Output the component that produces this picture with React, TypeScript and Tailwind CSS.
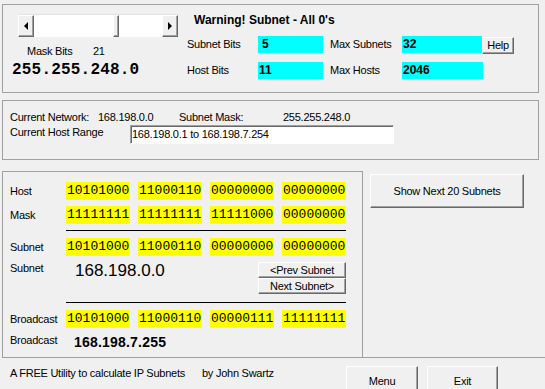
import React from "react";

const raised =
  "border border-t-white border-l-white border-r-[#696969] border-b-[#696969] bg-[#f0f0f0] shadow-[inset_-1px_-1px_0_#a0a0a0]";

function Octets({ values }: { values: string[] }) {
  return (
    <div className="flex gap-[8px]">
      {values.map((v, i) => (
        <div
          key={i}
          className="h-[18px] w-[64px] bg-[#ffff00] pl-[1px] font-['Liberation_Mono',monospace] text-[13px] leading-[18px] tracking-normal text-black"
        >
          {v}
        </div>
      ))}
    </div>
  );
}

function BitRow({ label, values, className = "" }: { label: string; values: string[]; className?: string }) {
  return (
    <div className={`flex items-center ${className}`}>
      <span className="w-[56px]">{label}</span>
      <Octets values={values} />
    </div>
  );
}

function ScrollBar() {
  return (
    <div className="flex h-[23px] w-[160px] border-t border-[#e3e3e3]">
      <div className={`flex w-[16px] items-center justify-center ${raised}`}>
        <div className="h-0 w-0 border-y-[4px] border-r-[4px] border-y-transparent border-r-black" />
      </div>
      <div className="w-[79px] bg-white" />
      <div className={`w-[6px] ${raised}`} />
      <div className="flex-1 bg-white" />
      <div className={`flex w-[16px] items-center justify-center ${raised}`}>
        <div className="h-0 w-0 border-y-[4px] border-l-[4px] border-y-transparent border-l-black" />
      </div>
    </div>
  );
}

function StatBox({ value, pad, width }: { value: string; pad: string; width: string }) {
  return (
    <div className={`h-[17px] ${width} ${pad} bg-[#00ffff] text-[12px] font-bold leading-[17px] tracking-normal`}>
      {value}
    </div>
  );
}

export default function App() {
  return (
    <div className="h-[389px] w-[545px] overflow-hidden bg-[#f0f0f0] font-['Liberation_Sans',Arial,sans-serif] text-[11px] leading-[13px] tracking-[-0.25px] text-black">
      {/* top panel */}
      <div className="ml-[2px] mt-[4px] flex h-[89px] w-[537px] border border-[#a0a0a0]">
        <div className="flex w-[180px] flex-col pl-[9px] pt-[9px]">
          <div className="ml-[6px]">
            <ScrollBar />
          </div>
          <div className="ml-[15px] mt-[8px] flex">
            <span className="w-[66px]">Mask Bits</span>
            <span>21</span>
          </div>
          <div className="mt-[3px] font-['Liberation_Mono',monospace] text-[16px] font-bold leading-[18px] tracking-[0.2px]">
            255.255.248.0
          </div>
        </div>
        <div className="flex flex-col pl-[4px] pt-[8px]">
          <div className="ml-[7px] text-[12px] font-bold leading-[14px] tracking-normal">Warning! Subnet - All 0's</div>
          <div className="mt-[9px] flex items-start">
            <span className="w-[71px] leading-[17px]">Subnet Bits</span>
            <StatBox value="5" pad="pl-[4px]" width="w-[65px]" />
            <span className="ml-[7px] w-[72px] leading-[17px]">Max Subnets</span>
            <StatBox value="32" pad="pl-[1px]" width="w-[80px]" />
            <button className={`mt-[1px] flex h-[17px] w-[32px] items-center justify-center text-[11px] ${raised}`}>
              Help
            </button>
          </div>
          <div className="mt-[8px] flex items-start">
            <span className="w-[71px] leading-[17px]">Host Bits</span>
            <StatBox value="11" pad="pl-[1px]" width="w-[65px]" />
            <span className="ml-[7px] w-[72px] leading-[17px]">Max Hosts</span>
            <StatBox value="2046" pad="pl-[1px]" width="w-[81px]" />
          </div>
        </div>
      </div>

      {/* network panel */}
      <div className="ml-[2px] mt-[7px] h-[60px] w-[537px] border border-[#a0a0a0] pl-[7px] pt-[10px]">
        <div className="flex">
          <span className="w-[88px]">Current Network:</span>
          <span className="w-[81px]">168.198.0.0</span>
          <span className="w-[104px]">Subnet Mask:</span>
          <span>255.255.248.0</span>
        </div>
        <div className="mt-[1px] flex items-start">
          <span className="mt-[1px] w-[120px]">Current Host Range</span>
          <div className="h-[19px] w-[264px] border border-t-[#a0a0a0] border-l-[#a0a0a0] border-r-white border-b-white bg-white pl-[1px] leading-[17px] shadow-[inset_1px_1px_0_#696969]">
            168.198.0.1 to 168.198.7.254
          </div>
        </div>
      </div>

      {/* binary panel */}
      <div className="mt-[11px] flex h-[187px]">
        <div className="ml-[2px] w-[361px] border border-[#a0a0a0] pl-[7px] pt-[10px]">
          <BitRow label="Host" values={["10101000", "11000110", "00000000", "00000000"]} />
          <BitRow className="mt-[6px]" label="Mask" values={["11111111", "11111111", "11111000", "00000000"]} />
          <div className="ml-[56px] mt-[6px] h-[1px] w-[280px] bg-black" />
          <BitRow className="mt-[7px]" label="Subnet" values={["10101000", "11000110", "00000000", "00000000"]} />
          <div className="mt-[6px] flex items-start">
            <span className="w-[56px]">Subnet</span>
            <span className="-mt-[1px] ml-[9px] w-[183px] text-[17px] leading-[20px] tracking-normal">168.198.0.0</span>
            <div className="flex flex-col">
              <button className={`flex h-[16px] w-[88px] items-center justify-center ${raised}`}>&lt;Prev Subnet</button>
              <button className={`flex h-[16px] w-[88px] items-center justify-center ${raised}`}>Next Subnet&gt;</button>
            </div>
          </div>
          <div className="ml-[56px] mt-[8px] h-[1px] w-[280px] bg-black" />
          <BitRow className="mt-[7px]" label="Broadcast" values={["10101000", "11000110", "00000111", "11111111"]} />
          <div className="mt-[6px] flex items-start">
            <span className="w-[56px]">Broadcast</span>
            <span className="ml-[8px] text-[14px] font-bold leading-[17px] tracking-[0.2px]">168.198.7.255</span>
          </div>
        </div>
        <div className="flex-1 border-b border-[#a0a0a0]">
          <button className={`ml-[7px] mt-[3px] h-[34px] w-[154px] text-[11px] ${raised}`}>Show Next 20 Subnets</button>
        </div>
      </div>

      {/* footer */}
      <div className="mt-[8px] flex items-start pl-[10px]">
        <span className="mt-[1px] w-[192px]">A FREE Utility to calculate IP Subnets</span>
        <span className="mt-[1px] w-[144px]">by John Swartz</span>
        <button className={`h-[30px] w-[72px] text-[11px] ${raised}`}>Menu</button>
        <button className={`ml-[9px] h-[30px] w-[71px] text-[11px] ${raised}`}>Exit</button>
      </div>
    </div>
  );
}
